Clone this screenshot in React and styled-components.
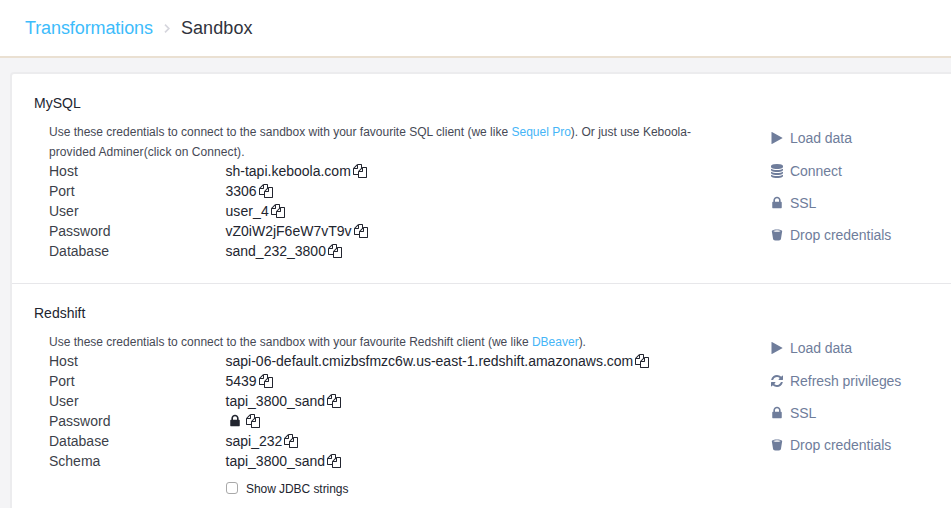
import React from "react";
import styled, { createGlobalStyle } from "styled-components";

const GlobalStyle = createGlobalStyle`
  * { box-sizing: border-box; }
  body {
    margin: 0;
    height: 508px;
    overflow: hidden;
    background: #f4f4f6;
    color: #22252f;
    font: 14px/20px "Liberation Sans", Arial, sans-serif;
  }
`;

const Page = styled.div`
  width: 951px;
  height: 508px;
  overflow: hidden;
`;

const Header = styled.header`
  display: flex;
  align-items: center;
  height: 58px;
  padding: 0 25px;
  border-bottom: 2px solid #eae0d2;
  background: #fff;
  font-size: 18px;
`;

const Crumb = styled.span`
  color: ${(p) => (p.$link ? "#3dbcfb" : "#30333c")};
  letter-spacing: ${(p) => p.$track || 0}px;
  white-space: nowrap;
`;

const CrumbArrow = styled.svg`
  width: 6px;
  height: 9px;
  margin: 0 11px;
  fill: none;
  stroke: #d6d6dd;
  stroke-width: 1.7;
`;

const Panel = styled.main`
  width: 960px;
  height: 460px;
  margin: 14px 0 0 10px;
  border: 2px solid #ececee;
  border-radius: 4px 0 0 0;
  background: #fff;
`;

const Section = styled.section`
  display: grid;
  grid-template-columns: 736px 1fr;
  align-content: start;
  padding: 19px 0 0 22px;
  height: 210px;
  border-bottom: 1px solid #e7e7ea;

  &:last-child {
    height: auto;
    border: 0;
  }
`;

const Title = styled.h2`
  grid-column: 1 / -1;
  margin: 0 0 9px;
  height: 20px;
  font: inherit;
`;

const Details = styled.div`
  padding-left: 15px;
`;

const Note = styled.p`
  margin: 0 0 -1px;
  font-size: 12px;
  color: #464955;
  white-space: nowrap;
`;

const Line = styled.span`
  display: block;
  letter-spacing: ${(p) => p.$track || 0}px;
`;

const Link = styled.a`
  color: #45b5f7;
`;

const Field = styled.div`
  display: grid;
  grid-template-columns: 176.5px 1fr;
  height: 20px;
  white-space: nowrap;
`;

const Label = styled.span`
  color: #3c3f4a;
`;

const Value = styled.span`
  display: flex;
  align-items: center;
`;

const ValueText = styled.span`
  letter-spacing: ${(p) => p.$track || 0}px;
`;

const Glyph = styled.svg`
  display: block;
  flex: none;
  width: 14px;
  height: 14px;
  fill: currentColor;
`;

const CopyIcon = styled(Glyph)`
  margin: 0 0 1px 2px;
`;

const SecretIcon = styled(Glyph)`
  margin: 0 2px 0 2px;
`;

const Toggle = styled.label`
  display: flex;
  align-items: center;
  gap: 8px;
  height: 20px;
  margin: 8px 0 0 177px;
  font-size: 12px;
  letter-spacing: -0.06px;
`;

const Checkbox = styled.input`
  appearance: none;
  width: 12px;
  height: 12px;
  margin: -2px 0 0;
  border: 1px solid #a9a9a9;
  border-radius: 3px;
  background: #fff;
`;

const Actions = styled.div`
  display: flex;
  flex-direction: column;
`;

const Action = styled.a`
  display: flex;
  align-items: center;
  height: 32px;
  color: #6f7d9b;
  white-space: nowrap;

  &:first-child {
    margin-bottom: 1px;
  }
`;

const ActionIcon = styled.span`
  display: flex;
  justify-content: center;
  width: 13px;
  margin-right: 7px;
`;

const ActionText = styled.span`
  letter-spacing: -0.04px;
`;

const PATHS = {
  copy: "M1696 384q40 0 68 28t28 68v1216q0 40-28 68t-68 28h-960q-40 0-68-28t-28-68v-288h-544q-40 0-68-28t-28-68v-672q0-40 20-88t48-76l408-408q28-28 76-48t88-20h416q40 0 68 28t28 68v328q68-40 128-40h416zm-544 213l-299 299h299v-299zm-640-384l-299 299h299v-299zm196 647l316-316v-416h-384v416q0 40-28 68t-68 28h-416v640h512v-256q0-40 20-88t48-76zm956 804v-1152h-384v416q0 40-28 68t-68 28h-416v640h896z",
  play: "M1576 927l-1328 738q-23 13-39.5 3t-16.5-36v-1472q0-26 16.5-36t39.5 3l1328 738q23 13 23 31t-23 31z",
  database:
    "M896 768q237 0 443-43t325-127v170q0 69-103 128t-280 93.5-385 34.5-385-34.5-280-93.5-103-128v-170q119 84 325 127t443 43zm0 768q237 0 443-43t325-127v170q0 69-103 128t-280 93.5-385 34.5-385-34.5-280-93.5-103-128v-170q119 84 325 127t443 43zm0-384q237 0 443-43t325-127v170q0 69-103 128t-280 93.5-385 34.5-385-34.5-280-93.5-103-128v-170q119 84 325 127t443 43zm0-1152q208 0 385 34.5t280 93.5 103 128v128q0 69-103 128t-280 93.5-385 34.5-385-34.5-280-93.5-103-128v-128q0-69 103-128t280-93.5 385-34.5z",
  lock: "M640 736h512v-192q0-106-75-181t-181-75-181 75-75 181v192zm864 96v640q0 40-28 68t-68 28h-1024q-40 0-68-28t-28-68v-640q0-40 28-68t68-28h48v-192q0-184 140-324t324-140 324 140 140 324v192h48q40 0 68 28t28 68z",
  refresh:
    "M1639 1056q0 5-1 7-64 268-268 434.5t-478 166.5q-146 0-282.5-55t-243.5-157l-129 129q-19 19-45 19t-45-19-19-45v-448q0-26 19-45t45-19h448q26 0 45 19t19 45-19 45l-137 137q71 66 161 102t187 36q134 0 250-65t186-179q11-17 53-117 8-23 30-23h192q13 0 22.5 9.5t9.5 22.5zm25-800v448q0 26-19 45t-45 19h-448q-26 0-45-19t-19-45 19-45l138-138q-148-137-349-137-134 0-250 65t-186 179q-11 17-53 117-8 23-30 23h-199q-13 0-22.5-9.5t-9.5-22.5v-7q65-268 270-434.5t480-166.5q146 0 284 55.5t245 156.5l130-129q19-19 45-19t45 19 19 45z",
  bucket:
    "M230 380C230 110 1562 110 1562 380L1400 1410Q1360 1610 896 1610T392 1410ZM400 380Q896 600 1392 380Q896 210 400 380Z",
};

function Icon({ name, as: Component = Glyph }) {
  return (
    <Component viewBox="0 0 1792 1792" aria-hidden="true">
      <path fillRule={name === "bucket" ? "evenodd" : "nonzero"} d={PATHS[name]} />
    </Component>
  );
}

function Credential({ label, value, track }) {
  return (
    <Field>
      <Label>{label}</Label>
      <Value>
        {value ? (
          <ValueText $track={track}>{value}</ValueText>
        ) : (
          <Icon name="lock" as={SecretIcon} />
        )}
        <Icon name="copy" as={CopyIcon} />
      </Value>
    </Field>
  );
}

function ActionList({ items }) {
  return (
    <Actions>
      {items.map(([icon, text]) => (
        <Action key={text}>
          <ActionIcon>
            <Icon name={icon} />
          </ActionIcon>
          <ActionText>{text}</ActionText>
        </Action>
      ))}
    </Actions>
  );
}

const MYSQL = [
  { label: "Host", value: "sh-tapi.keboola.com" },
  { label: "Port", value: "3306" },
  { label: "User", value: "user_4", track: 0.08 },
  { label: "Password", value: "vZ0iW2jF6eW7vT9v" },
  { label: "Database", value: "sand_232_3800" },
];

const REDSHIFT = [
  { label: "Host", value: "sapi-06-default.cmizbsfmzc6w.us-east-1.redshift.amazonaws.com" },
  { label: "Port", value: "5439" },
  { label: "User", value: "tapi_3800_sand" },
  { label: "Password" },
  { label: "Database", value: "sapi_232" },
  { label: "Schema", value: "tapi_3800_sand" },
];

export default function App() {
  return (
    <Page>
      <GlobalStyle />
      <Header>
        <Crumb $link $track={-0.1}>Transformations</Crumb>
        <CrumbArrow viewBox="0 0 6 9">
          <path d="M1 .7 4.8 4.5 1 8.3" />
        </CrumbArrow>
        <Crumb $track={0.1}>Sandbox</Crumb>
      </Header>
      <Panel>
        <Section>
          <Title>MySQL</Title>
          <Details>
            <Note>
              <Line>
                Use these credentials to connect to the sandbox with your favourite SQL client (we like{" "}
                <Link>Sequel Pro</Link>). Or just use Keboola-
              </Line>
              <Line $track={0.08}>provided Adminer(click on Connect).</Line>
            </Note>
            {MYSQL.map((f) => (
              <Credential key={f.label} {...f} />
            ))}
          </Details>
          <ActionList
            items={[
              ["play", "Load data"],
              ["database", "Connect"],
              ["lock", "SSL"],
              ["bucket", "Drop credentials"],
            ]}
          />
        </Section>
        <Section>
          <Title>Redshift</Title>
          <Details>
            <Note>
              <Line>
                Use these credentials to connect to the sandbox with your favourite Redshift client (we like{" "}
                <Link>DBeaver</Link>).
              </Line>
            </Note>
            {REDSHIFT.map((f) => (
              <Credential key={f.label} {...f} />
            ))}
            <Toggle>
              <Checkbox type="checkbox" />
              Show JDBC strings
            </Toggle>
          </Details>
          <ActionList
            items={[
              ["play", "Load data"],
              ["refresh", "Refresh privileges"],
              ["lock", "SSL"],
              ["bucket", "Drop credentials"],
            ]}
          />
        </Section>
      </Panel>
    </Page>
  );
}
